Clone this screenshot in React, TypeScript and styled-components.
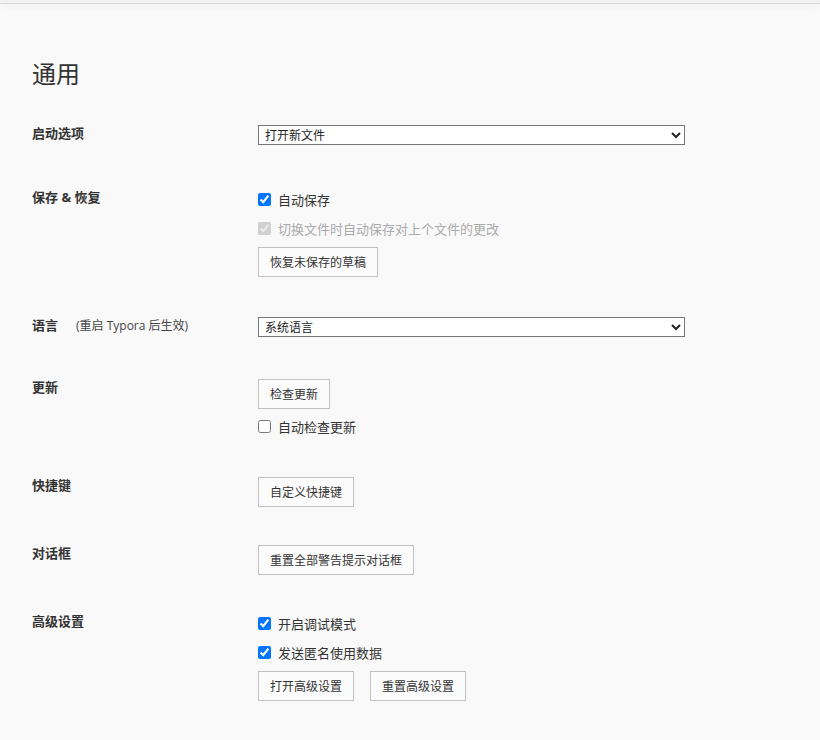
import React, { useState } from 'react';
import styled, { createGlobalStyle } from 'styled-components';

const GlobalStyle = createGlobalStyle`
  html, body {
    margin: 0;
    padding: 0;
    background: #f9f9f9;
  }
  body {
    font-family: "Open Sans", "Noto Sans CJK SC", sans-serif;
    color: #333;
  }
`;

const TopBar = styled.div`
  height: 3px;
  background: #f2f2f2;
  border-bottom: 1px solid #d8d8d8;
  box-shadow: 0 1px 10px rgba(0, 0, 0, 0.07);
`;

const Page = styled.div`
  padding: 58px 32px 40px;
`;

const Title = styled.h1`
  margin: 0 0 39px;
  font-size: 24px;
  line-height: 24px;
  font-weight: 400;
  color: #333;
`;

const Section = styled.div<{ $space: number }>`
  display: flex;
  align-items: flex-start;
  margin-bottom: ${p => p.$space}px;
`;

const Label = styled.div`
  width: 226px;
  flex: none;
  font-size: 13px;
  line-height: 17px;
  font-weight: 700;
  color: #333;
`;

const Hint = styled.span`
  margin-left: 18px;
  font-size: 12px;
  font-weight: 400;
  color: #444;
`;

const Controls = styled.div<{ $gap?: number }>`
  display: flex;
  flex-direction: column;
  align-items: flex-start;
  gap: ${p => p.$gap ?? 9}px;
`;

const Select = styled.select`
  width: 427px;
  height: 20px;
  margin: 0;
  padding: 0 2px;
  font-family: inherit;
  font-size: 12px;
  color: #222;
  background: #fff;
  border: 1px solid #767676;
  border-radius: 0;
  outline: none;
`;

const CheckRow = styled.label<{ $disabled?: boolean }>`
  display: flex;
  align-items: center;
  height: 20px;
  font-size: 13px;
  color: ${p => (p.$disabled ? '#aaa' : '#333')};

  input {
    width: 13px;
    height: 13px;
    margin: 0 7px 0 0;
  }
`;

const ButtonRow = styled.div`
  display: flex;
  gap: 16px;
`;

const Button = styled.button`
  height: 30px;
  margin: 0;
  padding: 0 11px;
  font-family: inherit;
  font-size: 12px;
  color: #333;
  background: #fbfbfb;
  border: 1px solid #c2c2c2;
  border-radius: 0;
  cursor: pointer;
`;

type CheckProps = {
  label: string;
  defaultChecked?: boolean;
  disabled?: boolean;
};

function Check ({ label, defaultChecked, disabled }: CheckProps) {
  const [checked, setChecked] = useState(!!defaultChecked);
  return (
    <CheckRow $disabled={disabled}>
      <input
        type="checkbox"
        checked={checked}
        disabled={disabled}
        onChange={() => setChecked(!checked)}
      />
      {label}
    </CheckRow>
  );
}

export default function App () {
  return (
    <>
      <GlobalStyle />
      <TopBar />
      <Page>
        <Title>通用</Title>

        <Section $space={44}>
          <Label>启动选项</Label>
          <Select defaultValue="new">
            <option value="new">打开新文件</option>
            <option value="last">重新打开上次使用的文件和目录</option>
            <option value="folder">打开指定目录</option>
          </Select>
        </Section>

        <Section $space={40}>
          <Label>保存 &amp; 恢复</Label>
          <Controls>
            <Check label="自动保存" defaultChecked />
            <Check label="切换文件时自动保存对上个文件的更改" defaultChecked disabled />
            <Button>恢复未保存的草稿</Button>
          </Controls>
        </Section>

        <Section $space={42}>
          <Label>
            语言<Hint>(重启 Typora 后生效)</Hint>
          </Label>
          <Select defaultValue="system">
            <option value="system">系统语言</option>
            <option value="zh">简体中文</option>
            <option value="en">English</option>
          </Select>
        </Section>

        <Section $space={41}>
          <Label>更新</Label>
          <Controls $gap={7}>
            <Button>检查更新</Button>
            <Check label="自动检查更新" />
          </Controls>
        </Section>

        <Section $space={38}>
          <Label>快捷键</Label>
          <Button>自定义快捷键</Button>
        </Section>

        <Section $space={38}>
          <Label>对话框</Label>
          <Button>重置全部警告提示对话框</Button>
        </Section>

        <Section $space={0}>
          <Label>高级设置</Label>
          <Controls>
            <Check label="开启调试模式" defaultChecked />
            <Check label="发送匿名使用数据" defaultChecked />
            <ButtonRow>
              <Button>打开高级设置</Button>
              <Button>重置高级设置</Button>
            </ButtonRow>
          </Controls>
        </Section>
      </Page>
    </>
  );
}
